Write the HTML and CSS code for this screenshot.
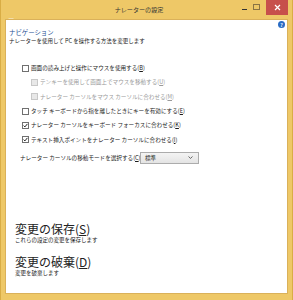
FILE: index.html
```html
<!DOCTYPE html>
<html lang="ja">
<head>
  <meta charset="UTF-8">
  <meta name="viewport" content="width=device-width, initial-scale=1.0">
  <title>ナレーターの設定</title>

  <link rel="stylesheet" href="styles.css">
</head>
<body>
<div class="window">
  <div class="titlebar">
    <span class="app-icon">
      <svg width="6" height="6" viewBox="0 0 6 6"><rect x="0.5" y="0.5" width="5" height="5" fill="#f7f4ee"/><circle cx="3.5" cy="3.5" r="1.6" fill="#23306b"/></svg>
    </span>
    <span class="title">ナレーターの設定</span>
    <div class="controls">
      <span class="btn-min"></span>
      <span class="btn-max"></span>
      <span class="btn-close">
        <svg width="7" height="7" viewBox="0 0 7 7"><path d="M1 1L6 6M6 1L1 6" stroke="#fff" stroke-width="1.2"/></svg>
      </span>
    </div>
  </div>

  <div class="client">
    <div class="top">
      <div class="intro">
        <h1>ナビゲーション</h1>
        <p class="desc">ナレーターを使用して PC を操作する方法を変更します</p>
      </div>
      <span class="help">?</span>
    </div>

    <div class="options">
      <div class="row"><span class="box"></span>画面の読み上げと操作にマウスを使用する(<u>B</u>)</div>
      <div class="row sub disabled"><span class="box"></span>テンキーを使用して画面上でマウスを移動する(<u>U</u>)</div>
      <div class="row sub disabled"><span class="box"></span>ナレーター カーソルをマウス カーソルに合わせる(<u>M</u>)</div>
      <div class="row"><span class="box"></span>タッチ キーボードから指を離したときにキーを有効にする(<u>E</u>)</div>
      <div class="row"><span class="box checked"><svg width="5" height="5" viewBox="0 0 5 5"><path d="M0.6 2.6L1.9 3.9L4.4 0.9" fill="none" stroke="#222" stroke-width="1"/></svg></span>ナレーター カーソルをキーボード フォーカスに合わせる(<u>K</u>)</div>
      <div class="row"><span class="box checked"><svg width="5" height="5" viewBox="0 0 5 5"><path d="M0.6 2.6L1.9 3.9L4.4 0.9" fill="none" stroke="#222" stroke-width="1"/></svg></span>テキスト挿入ポイントをナレーター カーソルに合わせる(<u>I</u>)</div>
    </div>

    <div class="mode">
      <span class="mode-label">ナレーター カーソルの移動モードを選択する(<u>C</u>):</span>
      <div class="select">
        <span>標準</span>
        <svg width="5" height="3" viewBox="0 0 5 3"><path d="M0.5 0.5L2.5 2.4L4.5 0.5" fill="none" stroke="#555" stroke-width="0.9"/></svg>
      </div>
    </div>

    <div class="action first">
      <h2>変更の保存(<u>S</u>)</h2>
      <p>これらの設定の変更を保存します</p>
    </div>
    <div class="action">
      <h2>変更の破棄(<u>D</u>)</h2>
      <p>変更を破棄します</p>
    </div>
  </div>
</div>
</body>
</html>
```

FILE: styles.css
```css
body {
  margin: 0;
  font-family: "Noto Sans CJK JP", "Noto Sans", sans-serif;
  color: #1a1a1a;
}
.window {
  width: 293px;
  height: 300px;
  box-sizing: border-box;
  background: #eec867;
  display: flex;
  flex-direction: column;
  border-left: 1px solid #d9ad45;
  border-right: 1px solid #d9ad45;
}
.titlebar {
  height: 19px;
  display: flex;
  align-items: flex-start;
}
.app-icon {
  margin: 5px 0 0 7px;
  width: 6px;
  height: 6px;
}
.title {
  flex: 1;
  text-align: center;
  font-size: 6.1px;
  line-height: 7px;
  margin-top: 6px;
  padding-left: 22px;
  color: #333;
}
.controls {
  display: flex;
  align-items: flex-start;
}
.btn-min {
  width: 5px;
  height: 1px;
  background: #333;
  margin: 9px 6px 0 0;
}
.btn-max {
  width: 5px;
  height: 4px;
  border: 1px solid #8a7444;
  margin: 4px 6px 0 0;
}
.btn-close {
  width: 22px;
  height: 15px;
  background: #c7504b;
  display: flex;
  align-items: center;
  justify-content: center;
  margin-right: 4px;
}
.client {
  flex: 1;
  margin: 0 4px 6px 4px;
  background: #fff;
  border: 1px solid #dab15a;
  padding: 0 2px 0 3px;
}
.top {
  display: flex;
  justify-content: space-between;
  align-items: flex-start;
}
.intro {
  padding-top: 9px;
}
h1 {
  margin: 0;
  font-size: 6.4px;
  line-height: 8px;
  font-weight: normal;
  color: #1e4f94;
}
.desc {
  margin: 1px 0 0;
  font-size: 5.5px;
  line-height: 7px;
}
.help {
  width: 7px;
  height: 7px;
  border-radius: 50%;
  background: #2a6cc4;
  color: #fff;
  font-size: 5px;
  line-height: 7px;
  text-align: center;
  font-weight: bold;
  margin-top: 1px;
}
.options {
  margin-top: 16px;
  padding-left: 13px;
}
.row {
  height: 14.3px;
  display: flex;
  align-items: center;
  font-size: 5.6px;
  white-space: nowrap;
}
.row.sub {
  padding-left: 9px;
}
.row.disabled {
  color: #9a9a9a;
}
.box {
  width: 5px;
  height: 5px;
  border: 1px solid #707070;
  background: #fff;
  margin-right: 2px;
  display: flex;
  flex-shrink: 0;
}
.disabled .box {
  border-color: #c8c8c8;
  background: #e8e8e8;
}
.mode {
  margin-top: 5px;
  padding-left: 11px;
  display: flex;
  align-items: center;
  font-size: 5.6px;
}
.mode-label {
  width: 122px;
  white-space: nowrap;
}
.select {
  width: 48px;
  height: 10px;
  border: 1px solid #acacac;
  background: linear-gradient(#f4f4f4, #e4e4e4);
  display: flex;
  align-items: center;
  justify-content: space-between;
  padding: 0 5px 0 4px;
  margin-left: -2px;
}
.action {
  margin-top: 11px;
  padding-left: 6px;
}
.action.first {
  margin-top: 58px;
}
h2 {
  margin: 0;
  font-size: 12px;
  line-height: 14px;
  font-weight: normal;
  color: #222;
}
.action p {
  margin: 1px 0 0;
  font-size: 5.5px;
  line-height: 7px;
}
```
